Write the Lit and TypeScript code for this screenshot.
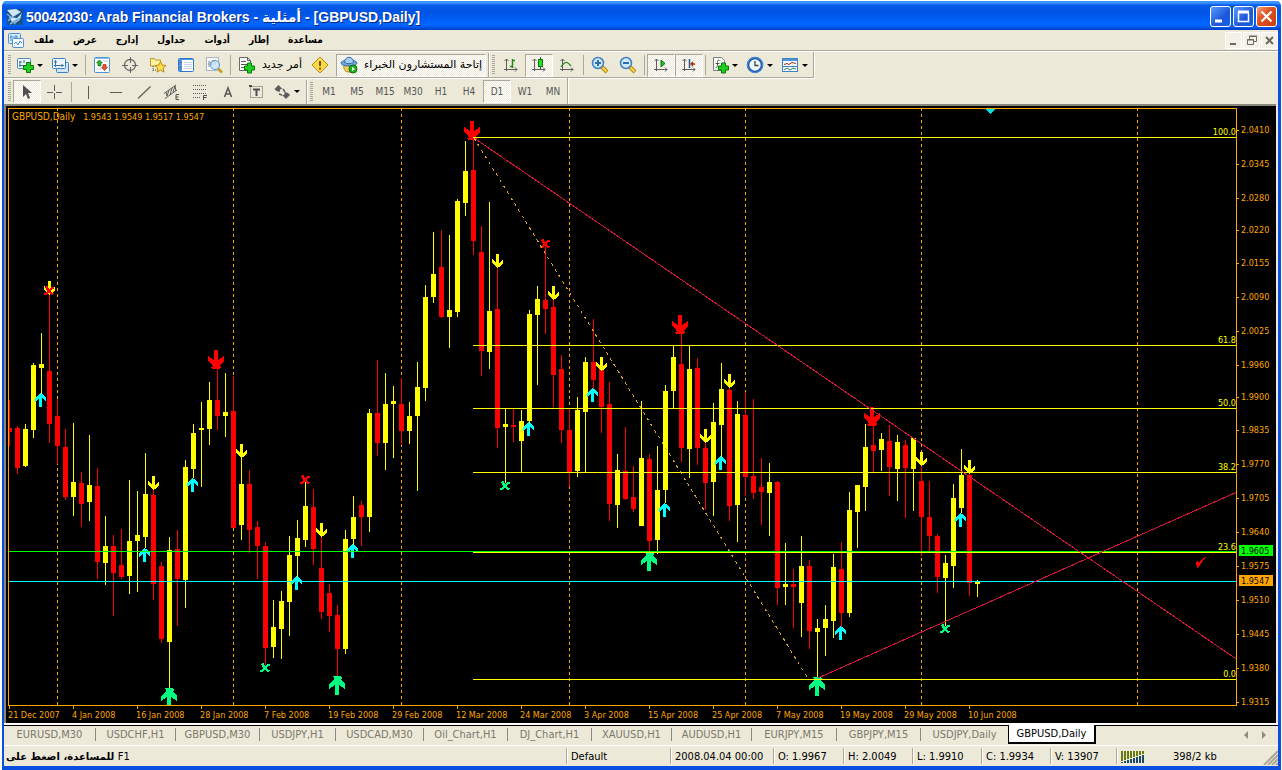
import { LitElement, html, css, svg } from "lit";
import { customElement, state } from "lit/decorators.js";

/* [colour, high, body top, body bottom, low], one entry every 8px from x = 9 */
type Candle = [string, number, number, number, number];
const CANDLES: Candle[] = [
  ["r", 400, 428, 432, 446], ["r", 426, 428, 468, 474], ["y", 424, 429, 466, 467], ["y", 363, 365, 430, 438],
  ["y", 333, 364, 368, 395], ["r", 292, 371, 424, 443], ["r", 399, 416, 446, 464], ["r", 429, 447, 497, 500],
  ["y", 423, 482, 497, 516], ["r", 472, 483, 504, 527], ["y", 435, 485, 502, 521], ["r", 468, 486, 562, 579],
  ["y", 516, 546, 563, 585], ["r", 535, 546, 573, 616], ["r", 529, 565, 577, 579], ["y", 480, 541, 576, 594],
  ["y", 491, 535, 541, 592], ["y", 453, 494, 537, 548], ["r", 490, 495, 584, 600], ["r", 562, 566, 639, 643],
  ["y", 537, 550, 642, 690], ["r", 530, 549, 579, 626], ["y", 460, 467, 580, 608], ["y", 424, 433, 469, 478],
  ["y", 402, 428, 430, 487], ["y", 382, 400, 429, 445], ["r", 368, 400, 416, 430], ["y", 373, 412, 416, 437],
  ["r", 376, 411, 528, 528], ["y", 457, 484, 525, 540], ["r", 470, 484, 530, 553], ["r", 521, 527, 546, 579],
  ["r", 542, 546, 648, 665], ["y", 600, 627, 647, 658], ["y", 591, 601, 629, 659], ["y", 536, 555, 602, 636],
  ["y", 520, 538, 556, 578], ["y", 481, 506, 540, 547], ["r", 489, 507, 549, 565], ["r", 537, 568, 612, 619],
  ["r", 584, 593, 616, 632], ["r", 605, 615, 649, 676], ["y", 530, 539, 649, 654], ["y", 496, 517, 539, 545],
  ["r", 501, 505, 517, 546], ["y", 409, 413, 517, 532], ["r", 360, 413, 443, 456], ["y", 373, 404, 443, 470],
  ["y", 386, 401, 404, 458], ["r", 378, 404, 431, 445], ["y", 402, 416, 431, 444], ["y", 362, 387, 416, 491],
  ["y", 285, 297, 388, 401], ["y", 232, 274, 297, 303], ["r", 230, 267, 317, 318], ["y", 235, 310, 317, 348],
  ["y", 199, 201, 312, 317], ["y", 141, 171, 203, 216], ["r", 138, 170, 241, 255], ["r", 226, 252, 351, 376],
  ["y", 202, 311, 352, 369], ["r", 267, 309, 428, 448], ["y", 409, 424, 427, 483], ["r", 409, 425, 427, 442],
  ["y", 410, 421, 441, 472], ["y", 310, 314, 421, 423], ["y", 286, 299, 315, 385], ["r", 245, 300, 309, 334],
  ["r", 298, 307, 375, 407], ["r", 355, 369, 430, 443], ["r", 409, 430, 472, 487], ["y", 397, 410, 471, 477],
  ["y", 357, 362, 412, 472], ["r", 319, 362, 380, 390], ["r", 365, 365, 407, 433], ["r", 382, 404, 504, 521],
  ["y", 454, 470, 505, 528], ["r", 427, 471, 499, 500], ["r", 466, 497, 509, 512], ["y", 401, 458, 526, 526],
  ["r", 454, 459, 541, 552], ["y", 446, 490, 540, 554], ["y", 385, 391, 490, 503], ["y", 346, 357, 391, 408],
  ["r", 333, 364, 448, 462], ["y", 346, 369, 449, 478], ["r", 358, 368, 448, 465], ["r", 442, 448, 483, 510],
  ["y", 403, 422, 482, 516], ["y", 363, 389, 425, 457], ["r", 387, 390, 506, 521], ["y", 401, 414, 505, 542],
  ["r", 392, 415, 477, 496], ["r", 399, 476, 493, 499], ["r", 458, 487, 492, 525], ["y", 463, 482, 493, 536],
  ["r", 481, 482, 588, 605], ["y", 543, 584, 587, 605], ["r", 569, 584, 587, 628], ["y", 536, 566, 603, 637],
  ["r", 560, 566, 631, 649], ["y", 619, 628, 632, 677], ["y", 605, 619, 628, 656], ["y", 554, 567, 621, 638],
  ["r", 542, 569, 613, 627], ["y", 492, 510, 613, 617], ["y", 485, 485, 512, 548], ["y", 424, 447, 487, 511],
  ["r", 425, 445, 451, 472], ["y", 433, 439, 450, 471], ["r", 425, 441, 467, 496], ["y", 435, 442, 469, 501],
  ["r", 440, 445, 468, 518], ["y", 438, 438, 469, 511], ["r", 465, 481, 517, 556], ["r", 481, 517, 536, 551],
  ["r", 534, 536, 577, 593], ["y", 555, 563, 578, 626], ["y", 484, 498, 566, 588], ["y", 449, 475, 508, 513],
  ["r", 473, 475, 583, 596], ["y", 580, 581, 584, 597],
];

const WEEKS = [57, 233, 401, 569, 745, 921, 1137];
const SELL_SMALL = [[49, 281], [153, 476], [241, 444], [321, 523], [497, 254], [553, 286], [601, 357], [705, 429], [729, 374], [921, 452], [969, 460]];
const BUY_SMALL = [[41, 393], [145, 548], [193, 478], [297, 576], [353, 544], [529, 422], [593, 388], [665, 503], [721, 456], [841, 626], [961, 513]];
const SELL_BIG = [[217, 350], [473, 121], [681, 315], [873, 407]];
const BUY_BIG = [[169, 687], [337, 675], [649, 551], [817, 676]];
const CROSS_GREEN = [[265, 663], [505, 481], [945, 624]];
const CROSS_RED = [[49, 286], [305, 475], [545, 239]];
const LEVELS: [number, string][] = [[137, "100.0"], [345, "61.8"], [408, "50.0"], [472, "38.2"], [552, "23.6"], [679, "0.0"]];
const PRICES: [number, string][] = [
  [130, "2.0410"], [164, "2.0345"], [198, "2.0280"], [230, "2.0220"], [263, "2.0155"], [297, "2.0090"],
  [331, "2.0025"], [365, "1.9960"], [397, "1.9900"], [430, "1.9835"], [464, "1.9770"], [498, "1.9705"],
  [532, "1.9640"], [566, "1.9575"], [600, "1.9510"], [634, "1.9445"], [668, "1.9380"], [702, "1.9315"],
];
const DATES = ["21 Dec 2007", "4 Jan 2008", "16 Jan 2008", "28 Jan 2008", "7 Feb 2008", "19 Feb 2008", "29 Feb 2008", "12 Mar 2008",
  "24 Mar 2008", "3 Apr 2008", "15 Apr 2008", "25 Apr 2008", "7 May 2008", "19 May 2008", "29 May 2008", "10 Jun 2008"];

const SMALL_DOWN = "M4 0h3v9l4-4v4l-4 4h-1v1h-1v-1h-1l-4-4v-4l4 4z";
const SMALL_UP = "M4 14h3v-9l4 4v-4l-4-4h-1v-1h-1v1h-1l-4 4v4l4-4z";
const BIG_DOWN = "M6 0h4v10l6-4v5l-4 4v1h1v2h-1v1h-8v-1h-1v-1h2l-1-2-4-4v-5l6 4z";
const BIG_UP = "M6 20h4v-10l6 4v-5l-4-4v-1h1v-2h-1v-1h-8v1h1v2l-1 1-4 4v5l6-4z";
const CROSS = "M2 0h2v2h1v1h1v-1h1v-1h3v2h-2v1h-1v2h1v1h2v1h-1v1h-2v-1h-1v-1h-2v1h-1v1h-3v-2h2v-1h1v-2h-1v-2h-1z";

@customElement("price-chart")
export class PriceChart extends LitElement {
  static styles = css`
    :host { display: grid; grid-template-columns: minmax(0, 1fr) 39px; grid-template-rows: minmax(0, 1fr) 17px;
      background: #000; padding: 2px 0 0 2px; box-sizing: border-box; font-family: "DejaVu Sans Condensed", "DejaVu Sans", sans-serif; font-size: 9px; }
    svg { display: block; width: 100%; height: 100%; overflow: hidden; }
    .plot { border: 1px solid #ffa500; min-height: 0; }
    .dates, .prices { min-height: 0; }
    .prices svg { overflow: visible; }
    .dates { grid-column: 1 / 3; }
    .crisp { shape-rendering: crispEdges; }
    .label { fill: #ffa500; }
    .symbol { font-size: 10px; }
    .level { fill: #ffff00; }
    .tagtext { fill: #000; }
  `;
  private marks(list: number[][], dx: number, path: string, fill: string) {
    return list.map(([x, y]) => svg`<path d=${path} fill=${fill} transform=${`translate(${x - dx} ${y})`}/>`);
  }
  render() {
    return html`
      <div class="plot">
        <svg role="img" aria-label="GBPUSD, Daily">
          <g class="crisp" transform="translate(-9 -109)">
            ${WEEKS.map((x) => svg`<path d=${`M${x}.5 108V2000`} stroke="#ffa500" stroke-dasharray="3 3"/>`)}
            ${CANDLES.map(([c, hi, top, bottom, lo], i) => {
              const x = 9 + i * 8;
              return svg`<path fill=${c === "r" ? "#ff0000" : "#ffff00"} d=${`M${x} ${hi}h1V${lo}h-1zM${x - 2} ${top}h5V${bottom}h-5z`}/>`;
            })}
            ${this.marks(SELL_SMALL, 5, SMALL_DOWN, "#ffff00")}
            ${this.marks(BUY_SMALL, 6, SMALL_UP, "#00ffff")}
            ${this.marks(SELL_BIG, 9, BIG_DOWN, "#ff0000")}
            ${this.marks(BUY_BIG, 8, BIG_UP, "#00ff80")}
            ${this.marks(CROSS_GREEN, 5, CROSS, "#00ff80")}
            ${this.marks(CROSS_RED, 5, CROSS, "#ff0000")}
            <path d="M8 551.5H4000" stroke="#00ff00"/>
            <path d="M8 581.5H4000" stroke="#00ffff"/>
            ${LEVELS.map(([y]) => svg`<path d=${`M473 ${y}.5H4000`} stroke="#ffff00"/>`)}
            <path d="M474 138L1237 659.500M818 678L1237 492" stroke="#dc143c" fill="none"/>
            <path d="M474 138L809 680" stroke="#daa520" stroke-dasharray="3 4" fill="none"/>
            <path d="M1196 562l2-1 1 2 3-4 4-2-4 5-4 6h-1z" fill="#ff0000"/>
            <path d="M985 109h10l-5 5z" fill="#00e0e0"/>
          </g>
          <text class="label" x="3" y="11"><tspan class="symbol">GBPUSD,Daily</tspan>&#160;&#160; 1.9543 1.9549 1.9517 1.9547</text>
          ${LEVELS.map(([y, t]) => svg`<text class="level" x="100%" y=${y - 111} text-anchor="end">${t}</text>`)}
        </svg>
      </div>
      <div class="prices">
        <svg>
          ${PRICES.map(([y, t]) => svg`<path class="crisp" d=${`M0 ${y - 108 + 0.5}h2`} stroke="#ffa500"/>
            <text class="label" x="4" y=${y - 105}>${t}</text>`)}
          <rect x="2" y="437" width="34" height="11" fill="#00ff00"/><text class="tagtext" x="4" y="446">1.9605</text>
          <rect x="2" y="467" width="34" height="11" fill="#ffa500"/><text class="tagtext" x="4" y="476">1.9547</text>
        </svg>
      </div>
      <div class="dates">
        <svg>
          ${DATES.map((t, i) => svg`<path class="crisp" d=${`M${1 + i * 64}.5 0v3`} stroke="#ffa500"/>
            <text class="label" x=${i * 64} y="12">${t}</text>`)}
        </svg>
      </div>`;
  }
}

const icon = (body: unknown, w = 18) => html`<svg class="ico" width=${w} height="18" viewBox=${`0 0 ${w} 18`} aria-hidden="true">${body}</svg>`;
const plus = (x: number, y: number) => svg`<path d="M3 0h4v3h3v4h-3v3h-4v-3h-3v-4h3z" transform=${`translate(${x} ${y})`} fill="#1fd01f" stroke="#087a08"/>`;
const axes = svg`<path d="M4.500 3v12M2 13.500h13M2.500 5l2-2 2 2M13 11.500l2 2-2 2" fill="none" stroke="#5c5c5c"/>`;
const lens = (sign: string) => svg`<path d="M10 10l6 6" stroke="#b8860b" stroke-width="4"/><path d="M10.500 10.500l5 5" stroke="#ffd84a" stroke-width="2"/>
  <circle cx="7" cy="7" r="5.500" fill="#cfe8fb" stroke="#3f7fc4" stroke-width="1.500"/><path d=${sign} stroke="#2a6fae" stroke-width="2"/>`;

const I = {
  app: icon(svg`<rect x="1" y="1" width="16" height="16" fill="#1d4f88"/><path d="M1 2l9-1 5 3-8 5zM3 9l8 1 5-5-3 8-7 1z" fill="#cfe6f5"/><path d="M1 6l5 4M4 16l8-5M8 16l7-7M2 13l5-5" stroke="#7fb6dc" stroke-width="1.500"/>`),
  doc: icon(svg`<rect x="1.500" y="2.500" width="12" height="10" rx="1" fill="#d5eafc" stroke="#4f8fd6"/><path d="M3 6h8M4 4v6M9 4v3" stroke="#4f8fd6"/><rect x="5.500" y="7.500" width="11" height="9" rx="1" fill="#f4faff" stroke="#4f8fd6"/><path d="M7 13l2-2 2 3 2-4 2 2" stroke="#4f8fd6" fill="none"/>`),
  newChart: icon(svg`<rect x="1.500" y="2.500" width="13" height="10" rx="1" fill="#eaf5ff" stroke="#4a8ac0"/><path d="M4 5v6M3 9.500h8M8 4v3M3 6h3" stroke="#4a6f90" fill="none"/>${plus(7.5, 6.5)}`),
  profiles: icon(svg`<rect x="5.500" y="6.500" width="12" height="10" rx="1" fill="#cfe6fa" stroke="#3d82c4"/><rect x="1.500" y="2.500" width="13" height="10" rx="1" fill="#eaf5ff" stroke="#3d82c4"/><path d="M4.500 4v7M3 9.500h10M11 8v3M3 6h3" stroke="#4a6f90" fill="none"/>`),
  market: icon(svg`<rect x="1.500" y="1.500" width="15" height="15" rx="1" fill="#fff" stroke="#4a95d8"/><path d="M2 2.500h14" stroke="#8cc0ee" stroke-width="1"/><path d="M9 11h6M4 13h5M4 5h3M10 5h5" stroke="#c0cce0"/><path d="M6.500 4l3 3h-1.500v3h-3V7H3.500z" fill="#28b028" stroke="#107010" stroke-width=".6"/><path d="M11.500 14.500l3-3h-1.500v-3h-3v3h-1.500z" fill="#f05030" stroke="#a02010" stroke-width=".6"/>`),
  target: icon(svg`<circle cx="9" cy="9" r="5.500" fill="none" stroke="#666" stroke-width="1.300"/><path d="M9.500 1v6M9.500 11v6M1 9.500h6M11 9.500h6" stroke="#666"/>`),
  nav: icon(svg`<path d="M1.500 2.500h4l1 1.500h5v6h-10z" fill="#fff0a0" stroke="#c39a20"/><path d="M4 10v5M4 14h4" stroke="#555" stroke-dasharray="1 1"/><path d="M11.500 5.500l1.600 3.600 3.900.4-2.900 2.600.9 4-3.500-2-3.500 2 .9-4-2.900-2.600 3.900-.4z" fill="#ffe04a" stroke="#b98a10"/>`),
  terminal: icon(svg`<rect x="1.500" y="2.500" width="15" height="13" rx="1" fill="#fff" stroke="#2f78c8"/><path d="M2 3.500h14" stroke="#4c94de"/><path d="M3.500 4v11" stroke="#4c94de" stroke-width="3"/><path d="M3 6.500h1M3 11.500h1" stroke="#d02020"/><path d="M7 6.500h8M7 8.500h8M7 10.500h8M7 12.500h8" stroke="#c4d4f0"/>`),
  tester: icon(svg`<rect x="1.500" y="1.500" width="12" height="13" fill="#f6f8fa" stroke="#a9b6c3"/><path d="M4 11V5l2 2 2-3 2 3v-3M3 8h8" stroke="#8898a8" fill="none"/><circle cx="10" cy="9" r="4.500" fill="#c6e2f6" fill-opacity=".8" stroke="#5b97ca"/><path d="M13 12.500l4 4" stroke="#c89a20" stroke-width="2.500"/>`),
  order: icon(svg`<path d="M2.500 1.500h8l3 3v10h-11z" fill="#fafafa" stroke="#6b6b6b"/><path d="M10.500 1.500v3h3M4 5.500h5M4 8.500h7M4 11.500h5" stroke="#555" fill="none"/>${plus(7.5, 7)}`),
  warn: icon(svg`<path d="M9 1l8 8-8 8-8-8z" fill="#ffd848" stroke="#c28a10"/><path d="M9 5v5M9 11.500v2" stroke="#7d5a10" stroke-width="2"/>`),
  expert: icon(svg`<path d="M4 9c-1 5 2 7 5 7s6-2 5-7z" fill="#f4cf52" stroke="#ae8622"/><ellipse cx="9" cy="7" rx="8" ry="3" fill="#6ea9dc" stroke="#336fa8"/><path d="M4.500 6.500c0-7 9-7 9 0-2 1.500-7 1.500-9 0z" fill="#a4cdf0" stroke="#336fa8"/><circle cx="13" cy="13" r="4" fill="#22b422" stroke="#0d700d"/><path d="M12 11v4l3-2z" fill="#fff"/>`),
  bars: icon(svg`${axes}<path d="M10.500 3v9M8 10.500h2.500M10.500 4.500H13" stroke="#1e8a1e" stroke-width="1.500" fill="none"/>`),
  candles: icon(svg`${axes}<path d="M10.500 1v12" stroke="#107010"/><rect x="8.500" y="3.500" width="4" height="7" fill="#22e022" stroke="#107010"/>`),
  line: icon(svg`${axes}<path d="M3 11c4-6 6-6 10-1" stroke="#2e8b2e" fill="none" stroke-width="1.300"/>`),
  zoomIn: icon(lens("M4 7h6M7 4v6")),
  zoomOut: icon(lens("M4 7h6")),
  scroll: icon(svg`${axes}<path d="M9 4v7l4-3.500z" fill="#20c020" stroke="#107010"/>`),
  shift: icon(svg`${axes}<path d="M9.500 3v9" stroke="#205a90" stroke-width="1.500"/><path d="M15 8h-3M13 6l-2 2 2 2" stroke="#b02010" stroke-width="1.300" fill="none"/>`),
  indi: icon(svg`<path d="M2.500 1.500h8l3 3v10h-11z" fill="#fafafa" stroke="#7b7b7b"/><path d="M8.500 4.500c-2-1-2 0-2 3s0 4-2 4M4.500 7.500h4" stroke="#555" fill="none"/>${plus(7.5, 7)}`),
  clock: icon(svg`<circle cx="9" cy="9" r="7" fill="#eef6fd" stroke="#1658b0" stroke-width="2.600"/><circle cx="9" cy="9" r="7.500" fill="none" stroke="#5fa4e8" stroke-width=".8"/><path d="M9 5v4.500h3.500" stroke="#444" stroke-width="1.300" fill="none"/>`),
  template: icon(svg`<rect x="1.500" y="2.500" width="15" height="13" fill="#f4faff" stroke="#3d82c4"/><path d="M2 4h14" stroke="#4f96dc" stroke-width="2"/><path d="M3 8.500l3-1 2 1 3-2 4 1" stroke="#a03020" fill="none"/><path d="M2 10.500h14" stroke="#3d82c4"/><path d="M3 14l3-2 3 2 3-2 3 1" stroke="#2c8a40" fill="none"/>`),
  cursor: icon(svg`<path d="M5 2v12l3-3 2 5 2-1-2-5h4z" fill="#4f4f4f"/>`),
  cross: icon(svg`<path d="M8.500 2v6M8.500 10v6M1 9.500h6M10 9.500h6" stroke="#5c5c5c"/>`),
  vline: icon(svg`<path d="M9.500 3v13" stroke="#5c5c5c"/>`),
  hline: icon(svg`<path d="M3 9.500h12" stroke="#5c5c5c"/>`),
  diag: icon(svg`<path d="M3 15.500L15.500 3.500" stroke="#5c5c5c" stroke-width="1.200"/>`),
  channel: icon(svg`<path d="M1 10.500L13 2M2 15.500L14 7M4 13l2-6M7 12l2-7M10 9l2-6M3 9l1 4M12 3l1 5" stroke="#5c5c5c" fill="none"/><path d="M16 11.500h-3v5h3M13 14h2.500" stroke="#4f4f4f" fill="none"/>`),
  fib: icon(svg`<path d="M2 2.500h14M2 6.500h14M2 10.500h14M2 14.500h8" stroke="#5c5c5c" stroke-dasharray="1 1"/><path d="M16 12.500h-3.500V17M12.500 14.500h3" stroke="#4f4f4f" fill="none"/>`),
  text: icon(svg`<path d="M5.500 14l3.500-9 3.500 9M6.500 11h5" stroke="#5c5c5c" fill="none" stroke-width="1.600"/>`),
  tlabel: icon(svg`<rect x="3.500" y="3.500" width="12" height="11" fill="none" stroke="#5c5c5c" stroke-dasharray="1 1"/><path d="M6 6.500h7M9.500 6v7" stroke="#4f4f4f" stroke-width="2"/><path d="M2 2h3v2h-3z" fill="#4f4f4f"/>`),
  arrows: icon(svg`<path d="M5.500 2l4 4h-2l-1 3-3-1-2-2z M9 12h2l1-3 3 1 2 2-4 4z" fill="#5c5c5c"/><path d="M6 11l3 1M10 6l2 3" stroke="#5c5c5c" stroke-width="1.500"/>`),
};

@customElement("app-root")
export class AppRoot extends LitElement {
  @state() private period = "D1";
  static styles = css`
    :host { display: block; height: 100vh; min-height: 400px; font-family: "DejaVu Sans Condensed", "DejaVu Sans", sans-serif; font-size: 11px; color: #000; background: #fff; }
    * { box-sizing: border-box; }
    button { font: inherit; color: inherit; background: none; border: 0; padding: 0; margin: 0; }
    .window { height: 100%; display: flex; flex-direction: column; padding: 0 3px 0 2px; }
    .title { flex: none; height: 30px; display: flex; align-items: center; gap: 2px; padding: 3px 4px 0 4px; color: #fff; border-radius: 6px 6px 0 0; margin: 0 -2px 0 0;
      background: linear-gradient(#fff 0 1px, #3d95ff 1px 3px, #0a5ce8 5px, #0054e3 12px, #0060f8 20px, #0066ff 25px, #0058ee 27px, #003dc0 30px); }
    .title h1 { flex: 1; margin: 0; font: bold 14px/20px "Liberation Sans", "DejaVu Sans", sans-serif; white-space: nowrap; text-shadow: 1px 1px #0a2a80; overflow: hidden; }
    .winbtn { width: 21px; height: 21px; border: 1px solid #fff; border-radius: 3px; background: linear-gradient(135deg, #5a9cff, #1c56d8 60%, #1a62e8); }
    .winbtn.close { background: linear-gradient(135deg, #f0a080, #e05420 40%, #c83c10); }
    .winbtn svg { display: block; }
    .body { flex: 1; min-height: 0; display: flex; flex-direction: column; background: #ece9d8; border: solid #0a50e0; border-width: 0 3px 4px 2px; margin-right: -2px; }
    .menu { flex: none; height: 20px; display: flex; align-items: center; padding: 0 0 0 3px; }
    .menu nav { flex: 1; display: flex; gap: 19px; padding-left: 9px; font: bold 10px/16px "DejaVu Sans Condensed", "DejaVu Sans", sans-serif; }
    .mdi { display: flex; gap: 1px; }
    .mdi button { width: 17px; height: 17px; background: #f4f2e8; border: 1px solid #fff; }
    .bars { flex: none; border-top: 1px solid #aca899; box-shadow: inset 0 1px #fff; padding-top: 1px; display: flex; flex-direction: column; align-items: flex-start; }
    .toolbar { display: flex; align-items: center; height: 26px; border: 1px solid #aca899; border-width: 0 1px 1px 0; box-shadow: 1px 1px #fff; padding: 1px 0 0 2px; }
    .toolbar.second { border-bottom: 0; color: #555; font-size: 10px; }
    .grip { width: 3px; height: 20px; margin: 0 2px; background: repeating-linear-gradient(#aca899 0 1px, transparent 1px 2px); }
    .sep { width: 1px; height: 20px; margin: 0 2px; background: #aca899; }
    .edge { width: 2px; height: 24px; margin-left: 1px; border-left: 1px solid #aca899; background: #fff; }
    .t { width: 28px; height: 23px; display: flex; align-items: center; justify-content: center; border: 1px solid transparent; white-space: nowrap; }
    .t.drop { width: 35px; padding-left: 2px; justify-content: flex-start; gap: 3px; }
    .t.drop::after { content: ""; border: 3px solid transparent; border-top-color: #000; margin-top: 3px; }
    .t.on { border-color: #aca899 #fff #fff #aca899; background: repeating-conic-gradient(#fff 0 25%, #ece9d8 0 50%) 0 0 / 2px 2px; }
    .t.order { width: 73px; gap: 7px; }
    .t.experts { width: 150px; gap: 6px; margin: 0 1px 0 2px; }
    .ar { font: 11px/16px "DejaVu Sans", sans-serif; color: #000; }
    .ico { display: block; flex: none; }
    price-chart { flex: 1; min-height: 0; border: solid #8a877c; border-width: 2px 0 0 2px; margin-right: 2px; }
    .tabs { flex: none; height: 22px; border-top: 2px solid #fff; display: flex; background: linear-gradient(#000 0 1px, #ece9d8 1px); line-height: 14px; color: #7b786c; }
    .tabgrid { flex: 1; display: grid; grid-template-columns: 92px 80px 84px 76px 88px 84px 84px 80px 80px 85px 84px 87px 88px; }
    .tab { text-align: center; white-space: nowrap; border-right: 1px solid #8a877c; height: 13px; margin-top: 3px; }
    .tab.near { border-right: 0; }
    .tab.active { height: 19px; margin-top: 0; background: #fff; color: #000; border: 1px solid #000; border-width: 0 2px 2px 1px; }
    .scrolls { display: flex; gap: 9px; align-items: center; padding-right: 4px; }
    .status { flex: none; height: 21px; border-top: 1px solid #fff; display: grid; grid-template-columns: minmax(0, 1fr) 104px 103px 70px 69px 69px 69px 66px 162px; align-items: center; }
    .cell { border-left: 1px solid #aca899; box-shadow: inset 1px 0 #fff; height: 16px; line-height: 17px; padding-left: 4px; white-space: nowrap; }
    .cell.help { border: 0; box-shadow: none; padding-left: 2px; font: bold 10px/17px "DejaVu Sans", sans-serif; }
    .cell.help b { font: 11px/17px "DejaVu Sans Condensed", "DejaVu Sans", sans-serif; }
    .cell.net { display: grid; grid-template-columns: 52px 1fr 15px; align-items: center; }
  `;
  private tool(name: string, i: unknown, cls = "") {
    return html`<button class="t ${cls}" title=${name} aria-label=${name}>${i}</button>`;
  }
  render() {
    const sep = html`<span class="sep"></span>`;
    const grip = html`<span class="grip"></span>`;
    return html`
      <div class="window">
        <header class="title">
          ${I.app}
          <h1>50042030: Arab Financial Brokers - أمثلية - [GBPUSD,Daily]</h1>
          <button class="winbtn" aria-label="Minimize"><svg width="19" height="19"><path d="M4 14h7" stroke="#fff" stroke-width="3"/></svg></button>
          <button class="winbtn" aria-label="Maximize"><svg width="19" height="19"><path d="M4.500 5v9.500h10V5M4 5h11" stroke="#fff" fill="none" stroke-width="1.500"/><path d="M4 5h11" stroke="#fff" stroke-width="3"/></svg></button>
          <button class="winbtn close" aria-label="Close"><svg width="19" height="19"><path d="M4.500 4.500l10 10M14.500 4.500l-10 10" stroke="#fff" stroke-width="2.200"/></svg></button>
        </header>
        <div class="body">
          <div class="menu">
            ${I.doc}
            <nav>${["ملف", "عرض", "إدارج", "جداول", "أدوات", "إطار", "مساعدة"].map((m) => html`<button>${m}</button>`)}</nav>
            <div class="mdi">
              <button aria-label="Minimize chart"><svg class="ico" width="15" height="15"><path d="M4 11h6" stroke="#6d6a60" stroke-width="2"/></svg></button>
              <button aria-label="Restore chart"><svg class="ico" width="15" height="15"><path d="M5.500 6V3.500h7v5H10M5 3h8M3.500 6.500h6v5h-6zM3 7h7" stroke="#6d6a60" fill="none"/></svg></button>
              <button aria-label="Close chart"><svg class="ico" width="15" height="15"><path d="M4 4l7 7M11 4l-7 7" stroke="#6d6a60" stroke-width="2"/></svg></button>
            </div>
          </div>
          <div class="bars">
            <div class="toolbar">
              ${grip}${this.tool("New chart", I.newChart, "drop")}${this.tool("Profiles", I.profiles, "drop")}${sep}
              ${this.tool("Market watch", I.market)}${this.tool("Data window", I.target)}${this.tool("Navigator", I.nav)}${this.tool("Terminal", I.terminal)}${this.tool("Strategy tester", I.tester)}${sep}
              <button class="t order">${I.order}<span class="ar">أمر جديد</span></button>
              ${this.tool("MetaEditor", I.warn)}
              <button class="t on experts">${I.expert}<span class="ar">إتاحة المستشارون الخبراء</span></button>
              <span class="edge"></span>${grip}
              ${this.tool("Bar chart", I.bars)}${this.tool("Candlesticks", I.candles, "on")}${this.tool("Line chart", I.line)}${sep}
              ${this.tool("Zoom in", I.zoomIn)}${this.tool("Zoom out", I.zoomOut)}${sep}
              ${this.tool("Auto scroll", I.scroll, "on")}${this.tool("Chart shift", I.shift, "on")}${sep}
              ${this.tool("Indicators", I.indi, "drop")}${this.tool("Periods", I.clock, "drop")}${this.tool("Templates", I.template, "drop")}
            </div>
            <div class="toolbar second">
              ${grip}${this.tool("Cursor", I.cursor, "on")}${this.tool("Crosshair", I.cross)}${sep}
              ${this.tool("Vertical line", I.vline)}${this.tool("Horizontal line", I.hline)}${this.tool("Trendline", I.diag)}${this.tool("Equidistant channel", I.channel)}${this.tool("Fibonacci retracement", I.fib)}${this.tool("Text", I.text)}${this.tool("Text label", I.tlabel)}${this.tool("Arrows", I.arrows, "drop")}
              <span class="edge"></span>${grip}
              ${["M1", "M5", "M15", "M30", "H1", "H4", "D1", "W1", "MN"].map((p) => html`<button class="t ${p === this.period ? "on" : ""}" @click=${() => (this.period = p)}>${p}</button>`)}
            </div>
          </div>
          <price-chart></price-chart>
          <div class="tabs">
            <div class="tabgrid">
              ${["EURUSD,M30", "USDCHF,H1", "GBPUSD,M30", "USDJPY,H1", "USDCAD,M30", "Oil_Chart,H1", "DJ_Chart,H1", "XAUUSD,H1", "AUDUSD,H1", "EURJPY,M15", "GBPJPY,M15", "USDJPY,Daily", "GBPUSD,Daily"]
                .map((t, i) => html`<button class="tab ${i === 12 ? "active" : i === 11 ? "near" : ""}">${t}</button>`)}
            </div>
            <div class="scrolls">
              <svg width="5" height="8"><path d="M4 0v8l-4-4z" fill="#8f8c80"/></svg>
              <svg width="16" height="8"><path d="M4 0v8l4-4z" fill="#8f8c80"/></svg>
            </div>
          </div>
          <footer class="status">
            <div class="cell help"><span dir="rtl"><b>F1</b> للمساعدة، اضغط على</span></div>
            <div class="cell">Default</div>
            <div class="cell">2008.04.04 00:00</div>
            <div class="cell">O: 1.9967</div>
            <div class="cell">H: 2.0049</div>
            <div class="cell">L: 1.9910</div>
            <div class="cell">C: 1.9934</div>
            <div class="cell">V: 13907</div>
            <div class="cell net">
              <svg width="24" height="12" class="ico">${[0, 1, 2, 3, 4, 5, 6, 7].map((i) => svg`<path d=${`M${i * 3} 0h2v${10 - i}h-2z`} fill="#6b7a10"/><path d=${`M${i * 3} ${11 - i}h2v${1 + i}h-2z`} fill="#1a4a6a"/>`)}</svg>
              <span>398/2 kb</span>
              <svg width="15" height="16" class="ico"><path d="M1 16L15 2M5 16L15 6M9 16l6-6M13 16l2-2" stroke="#aca899" stroke-width="2"/></svg>
            </div>
          </footer>
        </div>
      </div>`;
  }
}
